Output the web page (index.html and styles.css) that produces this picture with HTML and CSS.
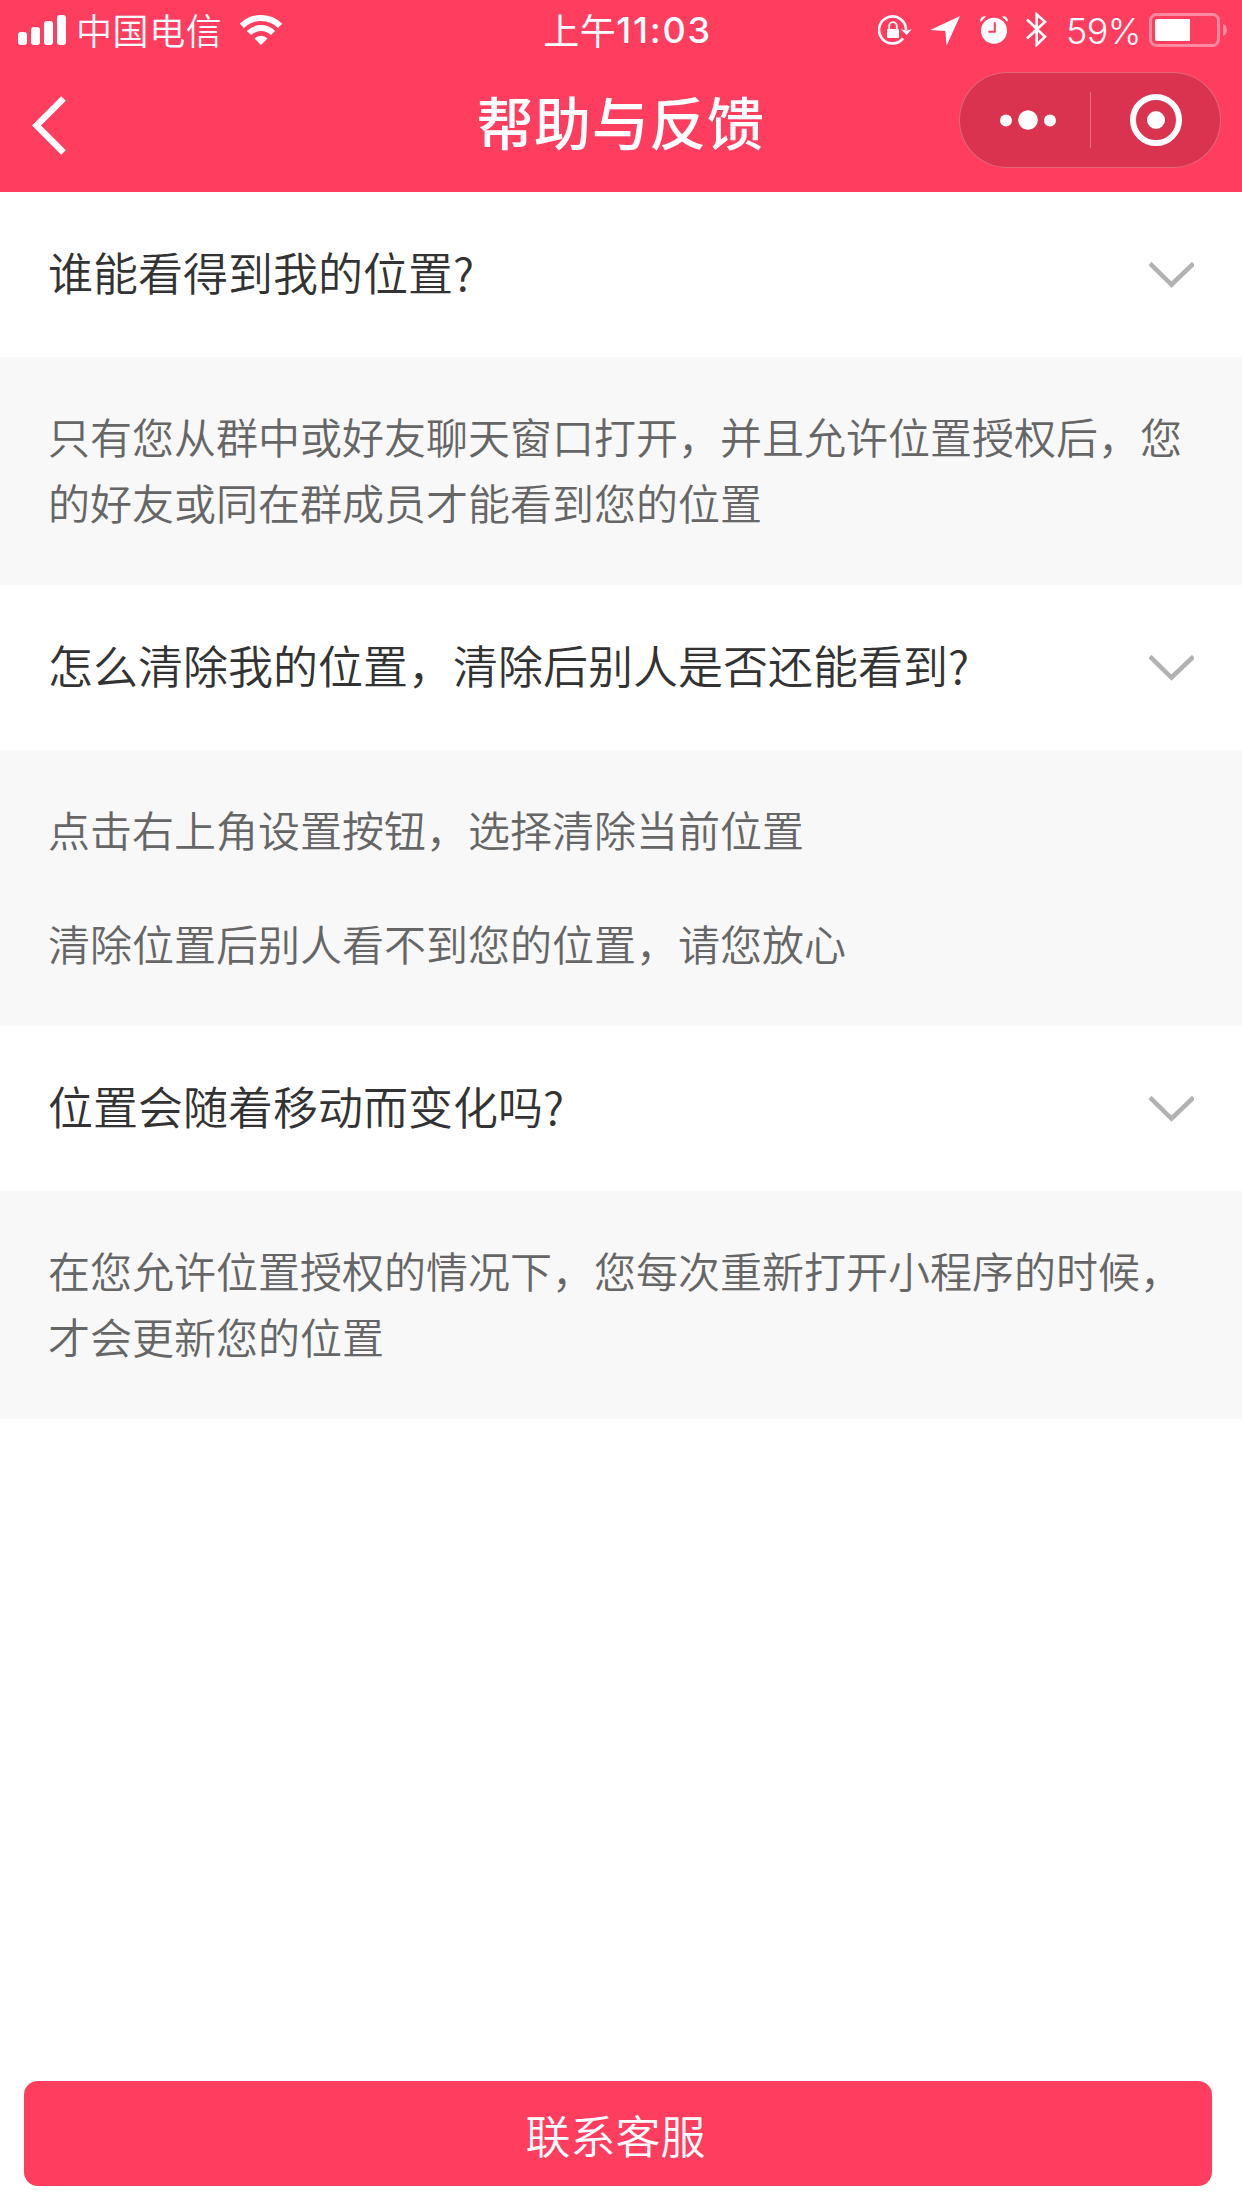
FILE: index.html
```html
<!DOCTYPE html>
<html lang="zh-CN">
<head>
    <meta charset="UTF-8">
    <meta name="viewport" content="width=device-width, initial-scale=1.0">
    <title>帮助与反馈</title>
    <link rel="stylesheet" href="styles.css">
</head>
<body>
    <header class="header">
        <div class="status-bar">
            <div class="status-left">
                <svg width="48" height="30" viewBox="0 0 48 30" fill="#fff">
                    <rect x="0" y="17" width="9" height="13" rx="3"/>
                    <rect x="13" y="12" width="9" height="18" rx="3"/>
                    <rect x="26" y="6" width="9" height="24" rx="3"/>
                    <rect x="39" y="0" width="9" height="30" rx="3"/>
                </svg>
                <span class="carrier">中国电信</span>
                <svg width="42" height="30" viewBox="0 0 42 30">
                    <g fill="none" stroke="#fff" stroke-width="6">
                        <path d="M1.9 10.9A27 27 0 0 1 40.1 10.9"/>
                        <path d="M9 18A17 17 0 0 1 33 18"/>
                    </g>
                    <path d="M21 30L14.5 23.5A9.3 9.3 0 0 1 27.5 23.5Z" fill="#fff"/>
                </svg>
            </div>
            <div class="status-time">上午<b>11:03</b></div>
            <div class="status-right">
                <svg class="lock" width="34" height="30" viewBox="0 0 34 30">
                    <path d="M28 15A13.5 13.5 0 1 0 25 23.4" fill="none" stroke="#fff" stroke-width="2.6"/>
                    <path d="M23 14.2L28.4 15.4L33.8 14.2L28.6 20Z" fill="#fff"/>
                    <rect x="9" y="14" width="12" height="9" rx="1" fill="#fff"/>
                    <path d="M11.2 15V11A3.8 3.8 0 0 1 18.8 11V15" fill="none" stroke="#fff" stroke-width="1.8"/>
                </svg>
                <svg class="location" width="30" height="31" viewBox="0 0 30 31">
                    <path d="M30 1L0.3 15L15.3 16L16.6 30.7Z" fill="#fff"/>
                </svg>
                <svg class="alarm" width="28" height="30" viewBox="0 0 28 30">
                    <circle cx="14" cy="15.7" r="13" fill="#fff"/>
                    <path d="M0.3 6.5C-0.3 3 2.5 0.7 6 1.5L0.9 6.8ZM27.7 6.5C28.3 3 25.5 0.7 22 1.5L27.1 6.8Z" fill="#fff"/>
                    <path d="M14.8 7.3V16.8H8.3" fill="none" stroke="#ff3d5f" stroke-width="2"/>
                </svg>
                <svg class="bluetooth" width="22" height="38" viewBox="0 0 22 38">
                    <path d="M1 8.5L19 25.8L10.7 33.8V3.4L19 10.8L1 27.5" fill="none" stroke="#fff" stroke-width="2.6"/>
                </svg>
                <span class="percent">59%</span>
                <svg width="78" height="34" viewBox="0 0 78 34">
                    <rect x="1.5" y="1.5" width="68" height="31" rx="6" fill="none" stroke="#fff" stroke-opacity=".4" stroke-width="3"/>
                    <path d="M8 6H41V28H8A2 2 0 0 1 6 26V8A2 2 0 0 1 8 6Z" fill="#fff"/>
                    <path d="M74 11A6.5 6.5 0 0 1 74 23Z" fill="#fff" fill-opacity=".4"/>
                </svg>
            </div>
        </div>
        <div class="nav-bar">
            <svg class="back" width="36" height="60" viewBox="0 0 36 60">
                <path d="M31.5 2.5L4.5 29.5L31.5 56.5" fill="none" stroke="#fff" stroke-width="6.5" stroke-linejoin="miter"/>
            </svg>
            <h1 class="title">帮助与反馈</h1>
            <div class="capsule">
                <svg width="56" height="20" viewBox="0 0 56 20" fill="#fff">
                    <circle cx="6" cy="10.5" r="6"/>
                    <circle cx="28" cy="10" r="9.8"/>
                    <circle cx="50" cy="10.5" r="6"/>
                </svg>
                <span class="capsule-line"></span>
                <svg width="52" height="52" viewBox="0 0 52 52">
                    <circle cx="26" cy="26" r="23" fill="none" stroke="#fff" stroke-width="6"/>
                    <circle cx="26" cy="26" r="9" fill="#fff"/>
                </svg>
            </div>
        </div>
    </header>

    <main class="faq">
        <div class="question">
            <span>谁能看得到我的位置?</span>
            <svg class="arrow" width="45" height="26" viewBox="0 0 45 26"><path d="M1 1.5L22.5 22.5L44.5 1.5"/></svg>
        </div>
        <div class="answer">
            <p>只有您从群中或好友聊天窗口打开，并且允许位置授权后，您的好友或同在群成员才能看到您的位置</p>
        </div>

        <div class="question">
            <span>怎么清除我的位置，清除后别人是否还能看到?</span>
            <svg class="arrow" width="45" height="26" viewBox="0 0 45 26"><path d="M1 1.5L22.5 22.5L44.5 1.5"/></svg>
        </div>
        <div class="answer">
            <p>点击右上角设置按钮，选择清除当前位置</p>
            <p>清除位置后别人看不到您的位置，请您放心</p>
        </div>

        <div class="question">
            <span>位置会随着移动而变化吗?</span>
            <svg class="arrow" width="45" height="26" viewBox="0 0 45 26"><path d="M1 1.5L22.5 22.5L44.5 1.5"/></svg>
        </div>
        <div class="answer">
            <p>在您允许位置授权的情况下，您每次重新打开小程序的时候，才会更新您的位置</p>
        </div>
    </main>

    <footer class="footer">
        <button class="contact">联系客服</button>
    </footer>
</body>
</html>
```

FILE: styles.css
```css
* {
    margin: 0;
    padding: 0;
    box-sizing: border-box;
}

body {
    display: flex;
    flex-direction: column;
    height: 2208px;
    background: #fff;
    font-family: "Noto Sans CJK SC", sans-serif;
    font-weight: 350;
    overflow: hidden;
}

svg {
    display: block;
    flex-shrink: 0;
}

.header {
    height: 192px;
    background: #ff3d5f;
    color: #fff;
}

/* status bar */
.status-bar {
    display: grid;
    grid-template-columns: 1fr auto 1fr;
    align-items: center;
    height: 60px;
    padding: 0 15px 0 18px;
    font-size: 36px;
    line-height: 54px;
}

.status-left,
.status-right {
    display: flex;
    align-items: center;
}

.status-right {
    justify-content: flex-end;
}

.carrier {
    width: 146px;
    margin: 0 18px 3px 10px;
    letter-spacing: 0.6px;
    white-space: nowrap;
}

.status-time {
    display: flex;
    margin-left: 10px;
    padding-bottom: 2px;
    font-weight: 400;
    letter-spacing: 0.5px;
}

.status-time b {
    padding-top: 1px;
    font-family: Inter, sans-serif;
    font-weight: 500;
    letter-spacing: 1.8px;
}

.lock {
    margin-right: 18px;
}

.location {
    margin-right: 20px;
}

.alarm {
    margin-right: 18px;
}

.percent {
    width: 74px;
    margin: 1px 9px 0 18px;
    font-family: Inter, sans-serif;
    font-weight: 300;
    letter-spacing: -0.6px;
    white-space: nowrap;
}

/* title bar */
.nav-bar {
    display: grid;
    grid-template-columns: 1fr auto 1fr;
    align-items: center;
    height: 132px;
    padding: 0 21px 12px 32px;
}

.back {
    margin-top: 12px;
}

.title {
    margin: 0 12px 1px 0;
    font-size: 57px;
    font-weight: 500;
    letter-spacing: 0.6px;
    line-height: 80px;
}

.capsule {
    display: flex;
    align-items: center;
    justify-self: end;
    width: 262px;
    height: 96px;
    padding: 0 38px 0 40px;
    justify-content: space-between;
    border: 1px solid rgba(255, 255, 255, 0.25);
    border-radius: 48px;
    background: #da334f;
}

.capsule-line {
    width: 1px;
    height: 56px;
    margin-right: 6px;
    background: rgba(255, 255, 255, 0.3);
}

/* questions */
.faq {
    flex: 1;
}

.question {
    display: flex;
    align-items: center;
    justify-content: space-between;
    height: 165px;
    padding: 0 48px;
    color: #333;
    font-size: 45px;
}

.question span {
    padding-bottom: 6px;
}

.arrow path {
    fill: none;
    stroke: #b2b2b2;
    stroke-width: 4.5;
}

.answer {
    padding: 46px 48px 50px;
    background: #f8f8f8;
    color: #666;
    font-size: 42px;
    line-height: 66px;
}

.answer p + p {
    margin-top: 48px;
}

.footer {
    padding: 0 30px 22px 24px;
}

.contact {
    display: block;
    width: 100%;
    height: 105px;
    padding: 2px 5px 0 0;
    border: none;
    border-radius: 14px;
    background: #ff3d5f;
    color: #fff;
    font-family: inherit;
    font-size: 45px;
    font-weight: 350;
}
```
